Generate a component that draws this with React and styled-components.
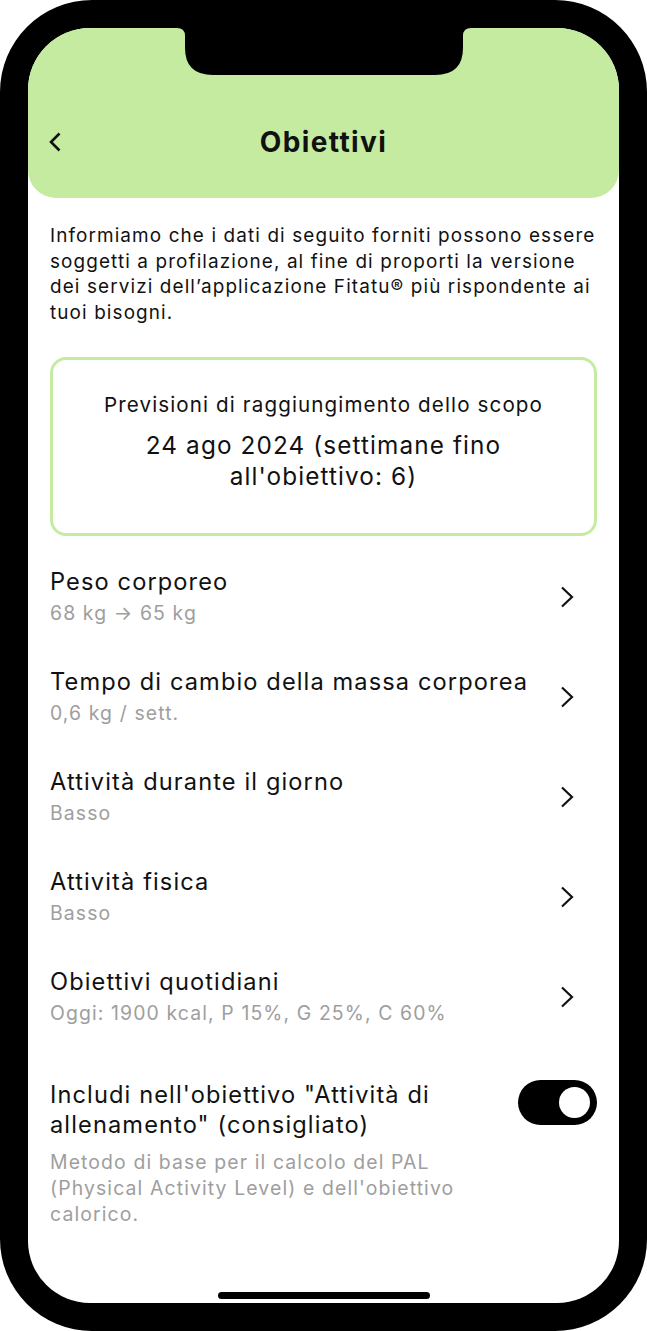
import React from 'react'
import styled, { createGlobalStyle } from 'styled-components'

const GlobalStyle = createGlobalStyle`
  html, body {
    margin: 0;
    padding: 0;
    background: #fff;
  }
  * { box-sizing: border-box; }
`

const Phone = styled.div`
  width: 647px;
  height: 1331px;
  background: #000;
  border-radius: 92px;
  padding: 28px;
  display: flex;
  font-family: Inter, "Noto Sans", sans-serif;
  letter-spacing: 0.07em;
  color: #111;
`

const Screen = styled.div`
  flex: 1;
  position: relative;
  background: #fff;
  border-radius: 62px;
  overflow: hidden;
  display: flex;
  flex-direction: column;
`

const Notch = styled.svg`
  position: absolute;
  top: 0;
  left: 50%;
  transform: translateX(-50%);
`

const Header = styled.header`
  height: 170px;
  background: #c5eba0;
  border-radius: 0 0 28px 28px;
  padding: 58px 20px 0;
  display: grid;
  grid-template-columns: 40px 1fr 40px;
  align-items: center;
`

const BackButton = styled.button`
  border: 0;
  background: none;
  padding: 0;
  display: flex;
  align-items: center;
  cursor: pointer;
`

const Title = styled.h1`
  margin: 0;
  text-align: center;
  font-size: 28px;
  font-weight: 700;
  letter-spacing: 0.05em;
`

const Content = styled.main`
  padding: 25px 22px 0;
`

const Intro = styled.p`
  margin: 0;
  font-size: 18.9px;
  line-height: 25.7px;
`

const ForecastCard = styled.section`
  margin-top: 31px;
  border: 3px solid #c5eba0;
  border-radius: 16px;
  padding: 33px 16px 41px;
  text-align: center;
`

const ForecastLabel = styled.div`
  font-size: 20.6px;
  line-height: 24px;
`

const ForecastDate = styled.div`
  margin-top: 13px;
  font-size: 24.3px;
  line-height: 31px;
`

const List = styled.div`
  margin-top: 11px;
`

const Row = styled.div`
  display: flex;
  align-items: center;
  padding: 19px 0;
  cursor: pointer;
`

const RowText = styled.div`
  flex: 1;
`

const RowTitle = styled.div`
  font-size: 23.6px;
  line-height: ${p => (p.$tight ? '30px' : '32px')};
`

const RowSub = styled.div`
  font-size: 19.4px;
  line-height: ${p => (p.$tight ? '26px' : '30px')};
  color: #9e9e9e;
  margin-top: ${p => (p.$gap ? '9px' : '0')};
`

const Chevron = styled.svg`
  margin-right: 23px;
  flex-shrink: 0;
`

const ToggleRow = styled.div`
  margin-top: 33px;
  display: flex;
  align-items: flex-start;
`

const ToggleText = styled.div`
  width: 460px;
`

const Toggle = styled.div`
  margin-left: auto;
  width: 79px;
  height: 45px;
  border-radius: 23px;
  background: ${p => (p.$on ? '#000' : '#ccc')};
  padding: 0 7px;
  display: flex;
  align-items: center;
  justify-content: ${p => (p.$on ? 'flex-end' : 'flex-start')};
`

const Knob = styled.div`
  width: 31px;
  height: 31px;
  border-radius: 50%;
  background: #fff;
`

const HomeBar = styled.div`
  margin-top: auto;
  margin-bottom: 4px;
  align-self: center;
  width: 212px;
  height: 7px;
  border-radius: 4px;
  background: #000;
`

const rows = [
  { title: 'Peso corporeo', sub: '68 kg → 65 kg' },
  { title: 'Tempo di cambio della massa corporea', sub: '0,6 kg / sett.' },
  { title: 'Attività durante il giorno', sub: 'Basso' },
  { title: 'Attività fisica', sub: 'Basso' },
  { title: 'Obiettivi quotidiani', sub: 'Oggi: 1900 kcal, P 15%, G 25%, C 60%' },
]

const ChevronRight = () => (
  <Chevron width="14" height="22" viewBox="0 0 14 22">
    <path d="M2 1.5 L12 11 L2 20.5" fill="none" stroke="#111" strokeWidth="2.2" />
  </Chevron>
)

export default function App() {
  return (
    <>
      <GlobalStyle />
      <Phone>
        <Screen>
          <Header>
            <BackButton aria-label="Indietro">
              <svg width="14" height="20" viewBox="0 0 14 20">
                <path d="M11.5 1.5 L3 10 L11.5 18.5" fill="none" stroke="#111" strokeWidth="2.6" />
              </svg>
            </BackButton>
            <Title>Obiettivi</Title>
            <span />
          </Header>
          <Notch width="294" height="48" viewBox="0 0 294 48">
            <path d="M0 0 H294 Q286 0 286 8 V20 Q286 47 258 47 H36 Q8 47 8 20 V8 Q8 0 0 0 Z" fill="#000" />
          </Notch>
          <Content>
            <Intro>
              Informiamo che i dati di seguito forniti possono essere soggetti a profilazione, al fine di
              proporti la versione dei servizi dell’applicazione Fitatu® più rispondente ai tuoi bisogni.
            </Intro>
            <ForecastCard>
              <ForecastLabel>Previsioni di raggiungimento dello scopo</ForecastLabel>
              <ForecastDate>24 ago 2024 (settimane fino all'obiettivo: 6)</ForecastDate>
            </ForecastCard>
            <List>
              {rows.map(r => (
                <Row key={r.title}>
                  <RowText>
                    <RowTitle>{r.title}</RowTitle>
                    <RowSub>{r.sub}</RowSub>
                  </RowText>
                  <ChevronRight />
                </Row>
              ))}
            </List>
            <ToggleRow>
              <ToggleText>
                <RowTitle $tight>Includi nell'obiettivo "Attività di allenamento" (consigliato)</RowTitle>
                <RowSub $tight $gap>
                  Metodo di base per il calcolo del PAL (Physical Activity Level) e dell'obiettivo calorico.
                </RowSub>
              </ToggleText>
              <Toggle $on>
                <Knob />
              </Toggle>
            </ToggleRow>
          </Content>
          <HomeBar />
        </Screen>
      </Phone>
    </>
  )
}
